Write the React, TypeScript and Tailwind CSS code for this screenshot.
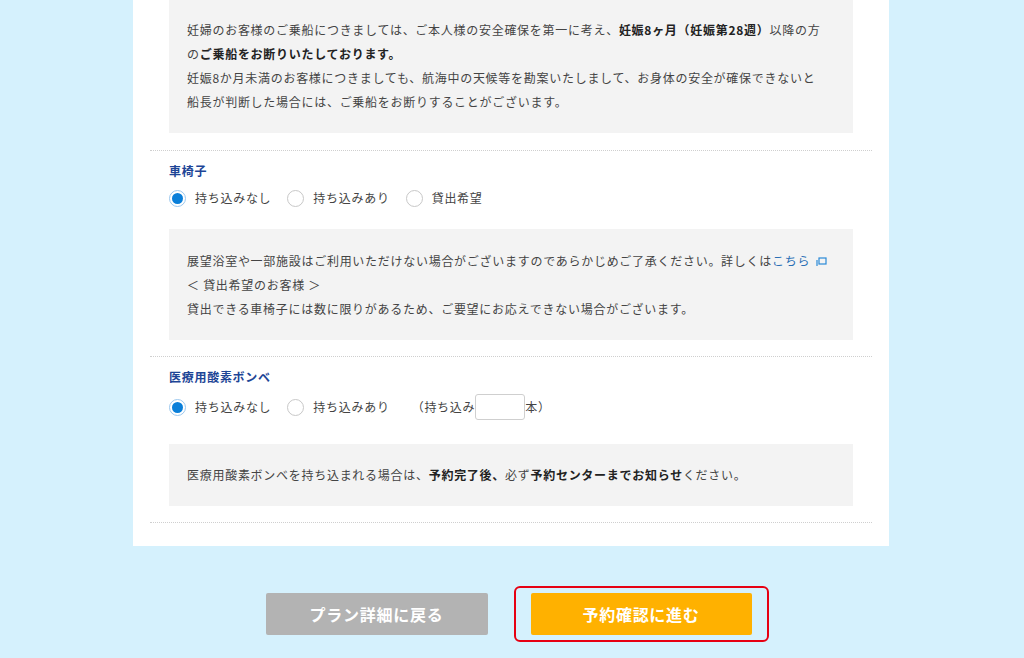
const font = { fontFamily: '"Noto Sans CJK JP", "Noto Sans", sans-serif' };

const Radio = ({ checked, label }: { checked?: boolean; label: string }) => (
  <label className="flex items-center gap-[9px] mr-[16px]">
    <span
      className={
        "w-[17px] h-[17px] rounded-full border flex items-center justify-center bg-white " +
        (checked ? "border-[#9cc8ee]" : "border-[#c8c8c8]")
      }
    >
      {checked && <span className="w-[11px] h-[11px] rounded-full bg-[#0a7fd9]" />}
    </span>
    <span>{label}</span>
  </label>
);

const Divider = () => <div className="border-t border-dotted border-[#cfcfcf] mx-[17px]" />;

export default function App() {
  return (
    <div style={font} className="w-[1024px] h-[658px] overflow-hidden bg-[#d5f1fd] text-[12px] tracking-[0.06em] text-[#444]">
      <div className="w-[756px] ml-[133px] bg-white pb-[23px]">
        <div className="px-[36px]">
          <div className="bg-[#f3f3f3] px-[18px] pt-[18px] pb-[19px] leading-[24px]">
            <p>
              妊婦のお客様のご乗船につきましては、ご本人様の安全確保を第一に考え、
              <b className="text-[#222]">妊娠8ヶ月（妊娠第28週）</b>以降の方
              <br />の<b className="text-[#222]">ご乗船をお断りいたしております。</b>
            </p>
            <p>妊娠8か月未満のお客様につきましても、航海中の天候等を勘案いたしまして、お身体の安全が確保できないと</p>
            <p>船長が判断した場合には、ご乗船をお断りすることがございます。</p>
          </div>
        </div>
        <div className="mt-[17px]"><Divider /></div>

        <div className="px-[36px] pt-[11px]">
          <div className="text-[#1d4596] font-bold leading-[18px]">車椅子</div>
          <div className="flex items-center mt-[9px] h-[18px]">
            <Radio checked label="持ち込みなし" />
            <Radio label="持ち込みあり" />
            <Radio label="貸出希望" />
          </div>
          <div className="bg-[#f3f3f3] mt-[22px] px-[18px] pt-[20px] pb-[19px] leading-[24px]">
            <p>
              展望浴室や一部施設はご利用いただけない場合がございますのであらかじめご了承ください。詳しくは
              <span className="text-[#2a6fb5]">こちら</span>
              <svg className="inline-block ml-[6px] -mt-[2px]" width="11" height="11" viewBox="0 0 11 11" fill="none" stroke="#2a8ad8" strokeWidth="1.2">
                <rect x="3" y="2" width="7" height="6" />
                <path d="M1 4v6h0" />
              </svg>
            </p>
            <p>＜ 貸出希望のお客様 ＞</p>
            <p>貸出できる車椅子には数に限りがあるため、ご要望にお応えできない場合がございます。</p>
          </div>
        </div>
        <div className="mt-[16px]"><Divider /></div>

        <div className="px-[36px] pt-[11px]">
          <div className="text-[#1d4596] font-bold leading-[18px]">医療用酸素ボンベ</div>
          <div className="flex items-center mt-[8px] h-[26px]">
            <Radio checked label="持ち込みなし" />
            <Radio label="持ち込みあり" />
            <span className="ml-[6px]">（持ち込み</span>
            <span className="w-[50px] h-[26px] border border-[#cfcfcf] rounded-[3px] bg-white" />
            <span>本）</span>
          </div>
          <div className="bg-[#f3f3f3] mt-[24px] px-[18px] py-[19px] leading-[24px]">
            <p>
              医療用酸素ボンベを持ち込まれる場合は、<b className="text-[#222]">予約完了後、</b>必ず
              <b className="text-[#222]">予約センターまでお知らせ</b>ください。
            </p>
          </div>
        </div>
        <div className="mt-[16px]"><Divider /></div>
      </div>

      <div className="flex justify-center items-center gap-[26px] mt-[40px] ml-[10px]">
        <button className="w-[222px] h-[42px] bg-[#b3b3b3] text-white text-[16px] font-bold rounded-[2px]">
          プラン詳細に戻る
        </button>
        <div className="border-2 border-[#e60012] rounded-[6px] px-[15px] py-[5px]">
          <button className="w-[221px] h-[42px] bg-[#ffb100] text-white text-[16px] font-bold rounded-[2px]">
            予約確認に進む
          </button>
        </div>
      </div>
    </div>
  );
}
